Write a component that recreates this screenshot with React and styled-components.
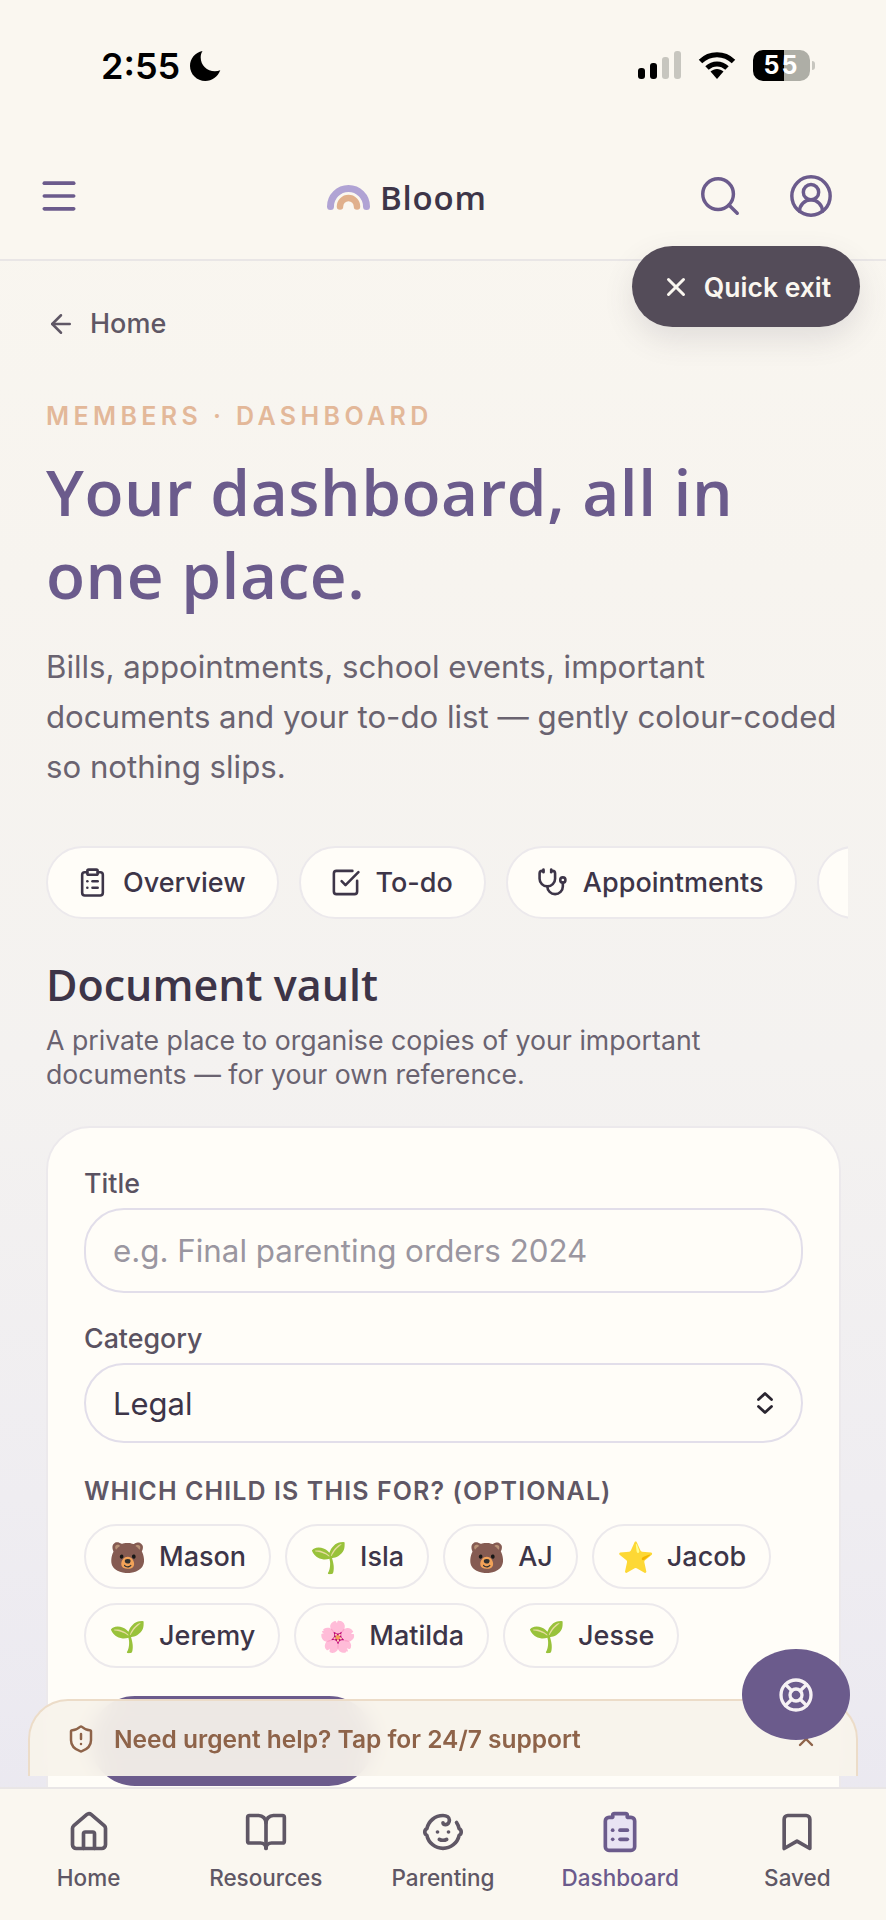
import styled, { createGlobalStyle } from "styled-components";
import {
  ArrowLeft,
  Baby,
  Bookmark,
  BookOpen,
  CircleUserRound,
  ClipboardList,
  House,
  LifeBuoy,
  Menu,
  Search,
  ShieldAlert,
  SquareCheckBig,
  Stethoscope,
  X,
} from "lucide-react";

const GlobalStyle = createGlobalStyle`
  * { box-sizing: border-box; }
  html, body { margin: 0; padding: 0; background: #faf7f0; }
  body { font-family: Inter, "Liberation Sans", sans-serif; }
`;

const Screen = styled.div`
  position: relative;
  width: 886px;
  height: 1920px;
  display: flex;
  flex-direction: column;
  overflow: hidden;
  background: linear-gradient(180deg, #faf7f0 0%, #f7f4ef 30%, #f4f2f0 55%, #efedf1 78%, #e9e7f0 100%);
`;

const StatusBar = styled.div`
  height: 132px;
  flex: none;
  display: flex;
  justify-content: space-between;
  align-items: flex-start;
  padding: 48px 76px 0 101px;
  background: #faf7f0;
`;
const TimeGroup = styled.div`
  display: flex;
  align-items: center;
  gap: 9px;
`;
const Time = styled.span`
  font-size: 36px;
  line-height: 36px;
  font-weight: 600;
  color: #000;
`;
const StatusIcons = styled.div`
  display: flex;
  align-items: center;
  gap: 17px;
  height: 34px;
`;
const Signal = styled.div`
  display: flex;
  align-items: flex-end;
  gap: 5px;
  height: 28px;
`;
const SignalBar = styled.i`
  display: block;
  width: 7px;
  height: ${(p) => p.$h}px;
  border-radius: 3px;
  background: ${(p) => (p.$on ? "#000" : "#c7c6bf")};
`;
const Battery = styled.div`
  position: relative;
  width: 57px;
  height: 31px;
  border-radius: 10px;
  display: flex;
  align-items: center;
  justify-content: center;
  font-size: 25px;
  font-weight: 700;
  letter-spacing: 2px;
  color: #fff;
  background: linear-gradient(90deg, #000 55%, #aeaea6 55%);
  &::after {
    content: "";
    position: absolute;
    right: -5px;
    top: 11px;
    width: 3px;
    height: 9px;
    border-radius: 0 3px 3px 0;
    background: #c7c6bf;
  }
`;

const Header = styled.header`
  height: 129px;
  flex: none;
  display: grid;
  grid-template-columns: 290px auto 1fr;
  align-items: center;
  padding: 0 52px 0 37px;
  background: #faf7f0;
  border-bottom: 2px solid #e9e6e6;
  color: #6b5b8c;
`;
const Logo = styled.div`
  display: flex;
  align-items: center;
  gap: 10px;
  margin-top: 3px;
`;
const LogoWord = styled.span`
  font-family: "Open Sans", sans-serif;
  font-size: 33px;
  font-weight: 600;
  letter-spacing: 0.8px;
  color: #3d3548;
`;
const HeaderActions = styled.div`
  display: flex;
  justify-content: flex-end;
  gap: 45px;
`;

const Main = styled.main`
  flex: 1;
  min-height: 0;
  padding: 47px 47px 0 46px;
  overflow: hidden;
`;
const BackLink = styled.a`
  display: flex;
  align-items: center;
  gap: 14px;
  font-size: 27px;
  line-height: 32px;
  font-weight: 500;
  color: #5f5765;
`;
const Eyebrow = styled.div`
  margin-top: 61px;
  font-size: 25px;
  line-height: 30px;
  font-weight: 600;
  letter-spacing: 4.4px;
  color: #e3b899;
`;
const Title = styled.h1`
  margin: 19px 0 0;
  font-family: "Open Sans", sans-serif;
  font-size: 64px;
  line-height: 83px;
  font-weight: 600;
  letter-spacing: 0.5px;
  color: #6b5b8c;
`;
const Lead = styled.p`
  margin: 26px 0 0;
  font-size: 31.2px;
  line-height: 50px;
  font-weight: 400;
  color: #6a6370;
  white-space: nowrap;
`;
const Tabs = styled.div`
  display: flex;
  gap: 20px;
  margin: 54px -9px 0 0;
  overflow: hidden;
`;
const Tab = styled.div`
  flex: none;
  height: 73px;
  display: flex;
  align-items: center;
  gap: 15px;
  padding: 0 31px 0 29px;
  min-width: ${(p) => p.$min || 0}px;
  border: 2px solid #ece9ec;
  border-radius: 37px;
  background: #fffdf8;
  font-size: 27px;
  font-weight: 500;
  color: #3d3548;
`;
const SectionTitle = styled.h2`
  margin: 38px 0 0;
  font-family: "Open Sans", sans-serif;
  font-size: 43px;
  line-height: 56px;
  font-weight: 600;
  color: #3d3548;
`;
const SectionText = styled.p`
  margin: 10px 0 0;
  font-size: 26.7px;
  line-height: 34px;
  color: #6a6370;
`;
const Card = styled.section`
  margin-top: 35px;
  width: 795px;
  height: 800px;
  padding: 39px 36px;
  border: 2px solid #ece9ec;
  border-radius: 44px;
  background: #fffdf8;
`;
const FieldLabel = styled.label`
  display: block;
  font-size: 26.8px;
  line-height: 32px;
  font-weight: 500;
  color: #5a5261;
`;
const TextInput = styled.input`
  display: block;
  width: 100%;
  height: 85px;
  margin: 9px 0 29px;
  padding: 0 27px;
  border: 2px solid #e2deea;
  border-radius: 40px;
  background: transparent;
  font: 400 31.3px Inter, sans-serif;
  color: #3d3548;
  outline: none;
  &::placeholder {
    color: #9a96a0;
    opacity: 1;
  }
`;
const SelectBox = styled.div`
  height: 80px;
  margin-top: 9px;
  padding: 0 27px 0 27px;
  display: flex;
  align-items: center;
  justify-content: space-between;
  border: 2px solid #e2deea;
  border-radius: 40px;
  font-size: 31px;
  color: #3d3548;
`;
const GroupLabel = styled.div`
  margin-top: 33px;
  font-size: 25px;
  line-height: 30px;
  font-weight: 600;
  letter-spacing: 1.1px;
  text-transform: uppercase;
  color: #5f5765;
`;
const Chips = styled.div`
  display: flex;
  flex-wrap: wrap;
  gap: 14px;
  margin-top: 18px;
`;
const Chip = styled.div`
  height: 65px;
  display: flex;
  align-items: center;
  gap: 13px;
  padding: 0 23px 0 23px;
  border: 2px solid #ece9ec;
  border-radius: 33px;
  font-size: 27px;
  font-weight: 500;
  color: #3d3548;
`;
const Emoji = styled.span`
  font-size: 30px;
  line-height: 1;
`;
const SubmitButton = styled.button`
  display: block;
  width: 284px;
  height: 90px;
  margin: 28px 0 0 6px;
  border: 0;
  border-radius: 45px;
  background: #6b5b8c;
`;

const BottomNav = styled.nav`
  height: 133px;
  flex: none;
  display: grid;
  grid-template-columns: repeat(5, 1fr);
  padding-top: 21px;
  background: #faf7f0;
  border-top: 2px solid #e9e6e6;
`;
const NavItem = styled.a`
  display: flex;
  flex-direction: column;
  align-items: center;
  gap: 9px;
  font-size: 22.5px;
  line-height: 30px;
  font-weight: 500;
  color: ${(p) => (p.$active ? "#6b5b8c" : "#5f5765")};
`;

const QuickExit = styled.button`
  position: absolute;
  left: 632px;
  top: 246px;
  width: 228px;
  height: 81px;
  display: flex;
  align-items: center;
  justify-content: center;
  gap: 13px;
  border: 0;
  border-radius: 41px;
  background: #544c59;
  box-shadow: 0 12px 30px rgba(84, 76, 89, 0.14);
  font: 600 26.5px Inter, sans-serif;
  color: #faf7f0;
`;
const UrgentBanner = styled.div`
  position: absolute;
  left: 28px;
  top: 1699px;
  width: 830px;
  height: 77px;
  display: flex;
  align-items: center;
  justify-content: space-between;
  padding: 0 38px 0 36px;
  border: 2px solid #ecdcc8;
  border-bottom: 0;
  border-radius: 40px 40px 0 0;
  background: rgba(247, 243, 235, 0.93);
  backdrop-filter: blur(10px);
  color: #8e6349;
`;
const UrgentText = styled.div`
  display: flex;
  align-items: center;
  gap: 18px;
  font-size: 24.5px;
  font-weight: 600;
`;
const HelpButton = styled.button`
  position: absolute;
  left: 742px;
  top: 1649px;
  width: 108px;
  height: 91px;
  display: flex;
  align-items: center;
  justify-content: center;
  border: 0;
  border-radius: 50%;
  background: #6b5b8c;
  color: #f6f1f4;
`;

const Rainbow = () => (
  <svg width="43" height="25" viewBox="0 0 43 25" fill="none" strokeLinecap="round">
    <path d="M3.5 21.5a18 18 0 0 1 36 0" stroke="#b0a3d4" strokeWidth="7" />
    <path d="M13 21.5a8.5 8.5 0 0 1 17 0" stroke="#e0b08c" strokeWidth="6.5" />
  </svg>
);

const Moon = () => (
  <svg width="33" height="32" viewBox="0 0 33 32">
    <path d="M13.5 1C6 2.5 1 8.800 1 16c0 8.300 6.900 15 15.300 15 6.700 0 12.500-4.200 15-10.700-1.600.7-3.500 1-5.400 1C18 21.300 11.700 15.200 11.700 7.500c0-2.400.6-4.600 1.800-6.500z" fill="#000" />
  </svg>
);

const Wifi = () => (
  <svg width="38" height="28" viewBox="0 0 38 28" fill="none">
    <path d="M2.500 10.500C11.800 1.500 26.200 1.500 35.500 10.500" stroke="#000" strokeWidth="5" />
    <path d="M9 17c5.800-5.400 14.200-5.400 20 0" stroke="#000" strokeWidth="5" />
    <path d="M12.500 20.500c3.800-3.400 9.200-3.400 13 0L19 28z" fill="#000" />
  </svg>
);

const SelectArrows = () => (
  <svg width="18" height="24" viewBox="0 0 18 24" fill="none" stroke="#2a2530" strokeWidth="2.800" strokeLinecap="round" strokeLinejoin="round">
    <path d="M2.500 8.500L9 2.500l6.500 6M2.500 15.500L9 21.500l6.500-6" />
  </svg>
);

const children = [
  { name: "Mason", emoji: "🐻" },
  { name: "Isla", emoji: "🌱" },
  { name: "AJ", emoji: "🐻" },
  { name: "Jacob", emoji: "⭐" },
  { name: "Jeremy", emoji: "🌱" },
  { name: "Matilda", emoji: "🌸" },
  { name: "Jesse", emoji: "🌱" },
];

const App = () => {
  return (
    <Screen>
      <GlobalStyle />
      <StatusBar>
        <TimeGroup>
          <Time>2:55</Time>
          <Moon />
        </TimeGroup>
        <StatusIcons>
          <Signal>
            <SignalBar $h={11} $on />
            <SignalBar $h={16} $on />
            <SignalBar $h={22} />
            <SignalBar $h={28} />
          </Signal>
          <Wifi />
          <Battery>55</Battery>
        </StatusIcons>
      </StatusBar>

      <Header>
        <Menu size={44} strokeWidth={2} />
        <Logo>
          <Rainbow />
          <LogoWord>Bloom</LogoWord>
        </Logo>
        <HeaderActions>
          <Search size={46} strokeWidth={1.8} />
          <CircleUserRound size={46} strokeWidth={1.8} />
        </HeaderActions>
      </Header>

      <Main>
        <BackLink>
          <ArrowLeft size={30} strokeWidth={2} />
          Home
        </BackLink>
        <Eyebrow>MEMBERS · DASHBOARD</Eyebrow>
        <Title>
          Your dashboard, all in
          <br />
          one place.
        </Title>
        <Lead>
          Bills, appointments, school events, important
          <br />
          documents and your to-do list — gently colour-coded
          <br />
          so nothing slips.
        </Lead>
        <Tabs>
          <Tab>
            <ClipboardList size={31} strokeWidth={2} />
            Overview
          </Tab>
          <Tab>
            <SquareCheckBig size={31} strokeWidth={2} />
            To-do
          </Tab>
          <Tab>
            <Stethoscope size={31} strokeWidth={2} />
            Appointments
          </Tab>
          <Tab $min={120} />
        </Tabs>
        <SectionTitle>Document vault</SectionTitle>
        <SectionText>
          A private place to organise copies of your important
          <br />
          documents — for your own reference.
        </SectionText>
        <Card>
          <FieldLabel>Title</FieldLabel>
          <TextInput placeholder="e.g. Final parenting orders 2024" />
          <FieldLabel>Category</FieldLabel>
          <SelectBox>
            Legal
            <SelectArrows />
          </SelectBox>
          <GroupLabel>Which child is this for? (optional)</GroupLabel>
          <Chips>
            {children.map((child) => (
              <Chip key={child.name}>
                <Emoji>{child.emoji}</Emoji>
                {child.name}
              </Chip>
            ))}
          </Chips>
          <SubmitButton aria-label="Add document" />
        </Card>
      </Main>

      <BottomNav>
        <NavItem>
          <House size={44} strokeWidth={2} />
          Home
        </NavItem>
        <NavItem>
          <BookOpen size={44} strokeWidth={2} />
          Resources
        </NavItem>
        <NavItem>
          <Baby size={44} strokeWidth={2} />
          Parenting
        </NavItem>
        <NavItem $active>
          <ClipboardList size={44} strokeWidth={2} fill="#e8e3f3" />
          Dashboard
        </NavItem>
        <NavItem>
          <Bookmark size={44} strokeWidth={2} />
          Saved
        </NavItem>
      </BottomNav>

      <QuickExit>
        <X size={30} strokeWidth={2.4} />
        Quick exit
      </QuickExit>
      <UrgentBanner>
        <UrgentText>
          <ShieldAlert size={30} strokeWidth={2} />
          Need urgent help? Tap for 24/7 support
        </UrgentText>
        <X size={24} strokeWidth={2.4} />
      </UrgentBanner>
      <HelpButton>
        <LifeBuoy size={36} strokeWidth={2.2} />
      </HelpButton>
    </Screen>
  );
};

export default App;
